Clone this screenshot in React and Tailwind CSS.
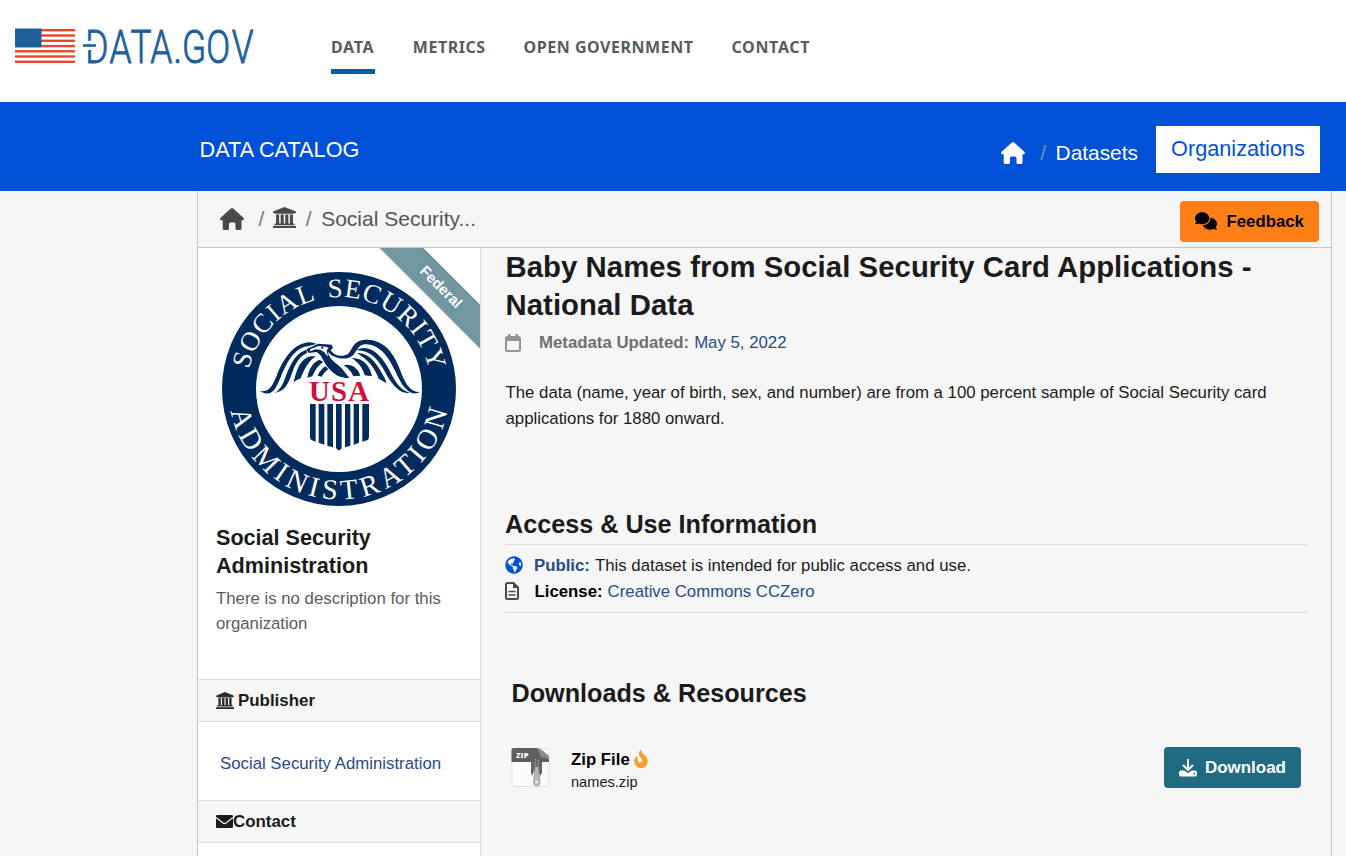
import { FaComments, FaFireFlameCurved } from "react-icons/fa6";
import { FaGlobeAmericas } from "react-icons/fa";

function Logo() {
  return (
    <svg className="h-[37px] w-[240px] overflow-visible" viewBox="15 28 240 37" aria-label="Data.gov">
      {[29, 34.3, 39.6, 44.9, 50.1, 55.3, 60.6].map((y) => (
        <rect key={y} x="15" y={y} width="60" height="2.4" fill="#e8482a" />
      ))}
      <rect x="15" y="28.5" width="26.5" height="18.800" fill="#205f9c" />
      <text transform="scale(.75 1)" x="113.6 146 174 200.400 231.5 242.7 275 308.9" y="62.6" fill="#205f9c" stroke="#205f9c" strokeWidth="0.9" fontSize="47" fontWeight="300" fontFamily="Roboto, sans-serif">DATA.GOV</text>
      <rect x="84" y="40.800" width="10" height="9.200" fill="#fff" />
      <rect x="83" y="44.200" width="13" height="2.600" fill="#205f9c" />
    </svg>
  );
}

function Seal() {
  return (
    <svg className="block h-[236px] w-[236px]" viewBox="221 271 236 236" aria-label="Social Security Administration seal">
      <defs>
        <path id="arcTop" d="M247 389 A92 92 0 0 1 431 389" />
        <path id="arcBottom" d="M228.5 389 A110.5 110.5 0 0 0 449.5 389" />
      </defs>
      <circle cx="339" cy="389" r="117" fill="#002b5c" />
      <circle cx="339" cy="389" r="83" fill="#fff" />
      <g fill="#fff" fontFamily="'Liberation Serif', serif" fontSize="28.5">
        <text fontSize="26.8" wordSpacing="5"><textPath href="#arcTop" startOffset="20" textLength="250">SOCIAL SECURITY</textPath></text>
        <text><textPath href="#arcBottom" startOffset="22" textLength="303">ADMINISTRATION</textPath></text>
      </g>
      <g transform="translate(250 330) scale(.33333)" fill="#002b5c">
        <path d="M28 183C58 187 66 170 80 137C103 80 133 40 178 37Q190 37 200 42L176 48C141 51 116 85 98 127C80 170 72 196 44 190Z" />
        <path d="M73 189C94 181 101 155 113 124C127 91 144 66 170 59L171 69C149 79 137 99 127 127C115 163 105 184 73 189Z" />
        <path d="M131 157C139 119 152 86 181 79L198 79C174 94 162 120 152 145Q140 150 131 157Z" />
        <path d="M172 143C177 115 189 98 208 89L220 96C203 107 194 123 187 139Z" />
        <path d="M203 137Q211 119 226 109L235 117Q221 128 215 140Z" />
        <path d="M170 57L205 41L245 44L249 54L242 60C249 75 275 83 292 73C309 62 304 29 352 29C405 30 434 75 450 119C466 160 478 186 510 186C490 198 469 184 454 159C431 120 411 48 350 43C315 42 324 76 295 84C273 89 247 82 234 65L236 74C244 94 264 101 277 117L298 144C268 144 249 132 232 110C218 92 216 74 199 66L176 69Q171 64 170 57Z" />
        <path d="M180 58L206 48L229 50L236 54L230 61L234 80L222 66L211 59L196 58L181 64Z" fill="#fff" />
        <circle cx="217" cy="53" r="3.500" />
        <path d="M318 61C358 38 395 78 415 115C433 150 449 181 479 188C451 194 429 165 411 137C387 91 365 61 318 61Z" />
        <path d="M321 69C357 68 379 99 394 127Q405 143 410 160L386 146C373 111 354 90 321 69Z" />
        <path d="M305 84C342 83 361 111 366 139L344 136C338 113 325 98 305 84Z" />
        <path d="M281 105Q319 99 331 137L310 139Q303 121 281 105Z" />
        <path d="M180 222H197V335L184 330Q180 327 180 320Z" />
        <path d="M206 222H223V344L206 338ZM232 222H249V352L232 347ZM258 222H275V355L268 362L258 355ZM285 222H301V347L285 352ZM311 222H327V338L311 344Z" />
        <path d="M337 222H357V320Q357 327 353 330L337 335Z" />
      </g>
      <text x="309" y="401" textLength="60" fill="#d0103a" fontFamily="'Liberation Serif', serif" fontWeight="700" fontSize="28.800">USA</text>
    </svg>
  );
}

function HomeIcon({ className }) {
  return (
    <svg className={className} viewBox="0 0 24 22" fill="currentColor">
      <path d="M10.800 .6Q12 -.5 13.200 .6L23.600 10Q24.500 12.200 22.500 12.200H21.500V20.500Q21.500 22 20 22H17Q15.500 22 15.500 20.500V16Q15.500 14.500 14 14.500H10.500Q9 14.500 9 16V20.500Q9 22 7.500 22H4.200Q2.700 22 2.700 20.500V12.200H1.500Q-.5 12.200 .4 10Z" />
    </svg>
  );
}

function InstitutionIcon({ className }) {
  return (
    <svg className={className} viewBox="0 0 1920 1792" preserveAspectRatio="none" fill="currentColor">
      <path d="M960 0l960 384v128h-128q0 26-20.500 45t-48.500 19h-1526q-28 0-48.500-19t-20.500-45h-128v-128zM256 640h256v768h128v-768h256v768h128v-768h256v768h128v-768h256v768h59q28 0 48.500 19t20.500 45v64h-1664v-64q0-26 20.500-45t48.500-19h59v-768zM1851 1600q28 0 48.500 19t20.500 45v128h-1920v-128q0-26 20.500-45t48.500-19h1782z" />
    </svg>
  );
}

function CalendarIcon() {
  return (
    <svg className="h-[18px] w-[16px] text-[#949494]" viewBox="0 0 16 18">
      <rect x="1" y="3" width="14" height="14" rx="1.500" fill="none" stroke="currentColor" strokeWidth="2" />
      <path d="M1 3H15V7H1ZM3 0H5.500V3H3ZM10.500 0H13V3H10.500Z" fill="currentColor" />
    </svg>
  );
}

function FileIcon() {
  return (
    <svg className="h-[18px] w-[14px] text-[#4a4a4a]" viewBox="0 0 14 18">
      <path d="M2.500 1H8.500L13 5.500V15.500Q13 17 11.500 17H2.500Q1 17 1 15.500V2.500Q1 1 2.500 1Z" fill="none" stroke="currentColor" strokeWidth="2" strokeLinejoin="round" />
      <path d="M8 1V6H13Z" fill="currentColor" />
      <path d="M3.500 9.500H10.500M3.500 13H10.500" stroke="currentColor" strokeWidth="1.700" />
    </svg>
  );
}

function MailIcon() {
  return (
    <svg className="h-[13px] w-[17px]" viewBox="0 0 17 13">
      <rect width="17" height="13" rx="1.200" fill="currentColor" />
      <path d="M0 2.500L7 8Q8.500 9.200 10 8L17 2.500" fill="none" stroke="#f6f6f6" strokeWidth="1.100" />
    </svg>
  );
}

function ZipIcon() {
  return (
    <svg className="h-[41px] w-[40px]" viewBox="0 0 40 41">
      <rect x="1" y="1.500" width="37" height="38" rx="2" fill="#fbfbfb" stroke="#e2e2e2" />
      <path d="M.5 15V3Q.5 1 2.500 1H26L38 11V15Z" fill="#5f5f5f" />
      <path d="M25 1C29 3 28 10 32 11Q36 10 38 13V9L31 3Q28 1 25 1Z" fill="#8b8b8b" />
      <path d="M20 15H31V26L29 29L27 24H23L21 29L20 26Z" fill="#656565" />
      <path d="M24.500 12V24M27 13V24" stroke="#aaa" strokeWidth="1.300" strokeDasharray="1.500 1.500" />
      <path d="M24 20H27.500L29 35Q29 39 25.700 39Q22.500 39 22.500 35Z" fill="#b7b7b7" stroke="#888" strokeWidth=".6" />
      <circle cx="25.700" cy="35" r="1.600" fill="#eee" />
      <text x="5" y="10.500" fill="#fff" fontFamily="'Open Sans', sans-serif" fontSize="7.500" fontWeight="800" textLength="12.500">ZIP</text>
    </svg>
  );
}

function DownloadIcon() {
  return (
    <svg className="h-[18px] w-[18px]" viewBox="0 0 18 18" fill="currentColor">
      <path d="M9 .8V10M4.500 6.500L9 11L13.500 6.500" fill="none" stroke="currentColor" strokeWidth="1.900" strokeLinecap="round" strokeLinejoin="round" />
      <path fillRule="evenodd" d="M2.200 11.500H5L9 14L13 11.500H15.800Q18 11.500 18 13.700V15Q18 17.500 15.800 17.500H2.200Q0 17.500 0 15V13.700Q0 11.500 2.200 11.500ZM15.300 13.700a.9 .9 0 1 0 .01 0Z" />
    </svg>
  );
}

const nav = [
  { label: "DATA", active: true, w: "w-[44px]", tracking: "tracking-[0.700px]" },
  { label: "METRICS", w: "w-[73px]", tracking: "tracking-[0.550px]" },
  { label: "OPEN GOVERNMENT", w: "w-[170px]", tracking: "tracking-[0.530px]" },
  { label: "CONTACT", w: "w-[80px]", tracking: "tracking-[0.700px]" },
];

export default function App() {
  return (
    <div className="flex h-[856px] w-[1346px] flex-col overflow-hidden bg-[#f5f5f5] font-['Liberation_Sans',Arial,sans-serif] text-[16.8px] text-[#1b1b1b]">
      <header className="flex h-[102px] shrink-0 items-start bg-white pl-[15px] pt-[28px]">
        <Logo />
        <nav className="ml-[76px] flex gap-[37.800px] font-['Noto_Sans','Open_Sans',sans-serif] text-[16px] font-bold text-[#565c65]">
          {nav.map((n) => (
            <a key={n.label} className={`${n.w} ${n.tracking} flex h-[46px] flex-col justify-between whitespace-nowrap pt-[7px] leading-[24px]`}>
              {n.label}
              {n.active && <span className="block h-[5px] w-full bg-[#005ea2]" />}
            </a>
          ))}
        </nav>
      </header>

      <div className="flex h-[89px] shrink-0 items-start bg-[#0050d8] pl-[199.500px] pr-[26px] text-white">
        <h1 className="pt-[35px] text-[21.700px] leading-[25px]">DATA CATALOG</h1>
        <div className="ml-auto flex text-[20.900px]">
          <HomeIcon className="mt-[40px] h-[22px] w-[24px]" />
          <span className="ml-[15px] mt-[38px] leading-[25px] text-[#7d8fa5]">/</span>
          <span className="ml-[9.500px] mt-[38px] leading-[25px]">Datasets</span>
          <span className="ml-[18px] mt-[24px] flex h-[47px] w-[164px] justify-center bg-white pt-[10px] text-[21.700px] leading-[25px] text-[#0050d8]">Organizations</span>
        </div>
      </div>

      <div className="ml-[197px] flex w-[1135px] flex-1 flex-col border-x border-[#c6c6c6]">
        <div className="flex h-[57px] shrink-0 items-start border-b border-[#c6c6c6] pl-[21.500px] pr-[12px] text-[21px] leading-[25px] text-[#4a4a4a]">
          <HomeIcon className="mt-[17px] h-[22px] w-[24px]" />
          <span className="ml-[15px] mt-[15px] text-[#777]">/</span>
          <InstitutionIcon className="ml-[8.500px] mt-[16px] h-[21px] w-[23px]" />
          <span className="ml-[10px] mt-[15px] text-[#777]">/</span>
          <span className="ml-[9.500px] mt-[15px] text-[#565656]">Social Security...</span>
          <button className="ml-auto mt-[10px] flex h-[41px] w-[139px] items-center rounded-[4px] bg-[#ff7f16] pl-[15px] text-[16.800px] font-bold text-black">
            <FaComments className="mb-[2px] h-[22px] w-[22px]" />
            <span className="ml-[9.500px]">Feedback</span>
          </button>
        </div>

        <div className="flex min-h-0 flex-1">
          <aside className="relative flex w-[283px] shrink-0 flex-col border-r border-[#dcdcdc] bg-white">
            <div className="absolute right-0 top-0 h-[103px] w-[103px] overflow-hidden">
              <span className="absolute -left-[37px] top-[22.500px] flex h-[31px] w-[200px] rotate-45 items-center justify-center bg-[#7297a0] pl-[2px] text-[14.800px] font-bold text-white">Federal</span>
            </div>
            <div className="h-[431px] shrink-0 pl-[18px] pt-[23px]">
              <div className="ml-[5px]"><Seal /></div>
              <h2 className="mt-[17px] text-[21.600px] font-bold leading-[28px]">Social Security<br />Administration</h2>
              <p className="mt-[6px] leading-[25px] text-[#5c5c5c]">There is no description for this<br />organization</p>
            </div>
            <h3 className="flex h-[43px] shrink-0 items-center border-y border-[#dcdcdc] bg-[#f6f6f6] pl-[18px] text-[16.900px] font-bold">
              <InstitutionIcon className="h-[17px] w-[18px] text-[#2c2c2c]" />
              <span className="ml-[4px]">Publisher</span>
            </h3>
            <div className="flex h-[78px] shrink-0 items-center pl-[22px] pt-[5px] text-[#2a4b84]">Social Security Administration</div>
            <h3 className="flex h-[43px] shrink-0 items-center border-y border-[#dcdcdc] bg-[#f6f6f6] pl-[18px] text-[16.900px] font-bold">
              <MailIcon />
              <span>Contact</span>
            </h3>
          </aside>

          <main className="flex-1 bg-[#f6f6f6] pl-[24px] pr-[24px]">
            <h1 className="pl-[.5px] text-[29.300px] font-bold leading-[38px] tracking-[0.060px]">Baby Names from Social Security Card Applications -<br />National Data</h1>
            <div className="mt-[6px] flex h-[25px] items-center">
              <CalendarIcon />
              <b className="ml-[18px] text-[#6f6f6f]">Metadata Updated:</b>
              <span className="ml-[5px] text-[#2a4b84]">May 5, 2022</span>
            </div>
            <p className="mt-[25px] whitespace-nowrap pl-[.5px] leading-[26px]">The data (name, year of birth, sex, and number) are from a 100 percent sample of Social Security card<br />applications for 1880 onward.</p>
            <h2 className="mb-[1px] mt-[73px] text-[25.200px] font-bold leading-[38px]">Access &amp; Use Information</h2>
            <div className="flex h-[69px] flex-col border-y border-[#dcdcdc] pt-[8px]">
              <div className="flex h-[26px] items-center">
                <FaGlobeAmericas className="mb-[2px] h-[18px] w-[18px] text-[#0050d8]" />
                <b className="ml-[11px] text-[#2a4b84]">Public:</b>
                <span className="ml-[5px]">This dataset is intended for public access and use.</span>
              </div>
              <div className="flex h-[26px] items-center">
                <span className="mb-[2px]"><FileIcon /></span>
                <b className="ml-[15.500px] text-black">License:</b>
                <span className="ml-[5px] text-[#2a4b84]">Creative Commons CCZero</span>
              </div>
            </div>
            <h2 className="ml-[6.500px] mt-[61px] text-[25.200px] font-bold leading-[38px]">Downloads &amp; Resources</h2>
            <div className="ml-[6px] mt-[35px] flex items-start">
              <ZipIcon />
              <div className="ml-[20px] pt-[1px]">
                <div className="flex h-[24px] items-center font-bold text-black">Zip File<FaFireFlameCurved className="mb-[2px] ml-[4px] h-[18px] w-[14px] text-[#f7a030]" /></div>
                <div className="text-[14.600px] leading-[20px]">names.zip</div>
              </div>
              <button className="ml-auto mr-[6px] flex h-[41px] w-[137px] items-center rounded-[4px] bg-[#216b82] pl-[15px] text-[16.960px] font-bold text-white">
                <DownloadIcon />
                <span className="ml-[8px]">Download</span>
              </button>
            </div>
          </main>
        </div>
      </div>
    </div>
  );
}
